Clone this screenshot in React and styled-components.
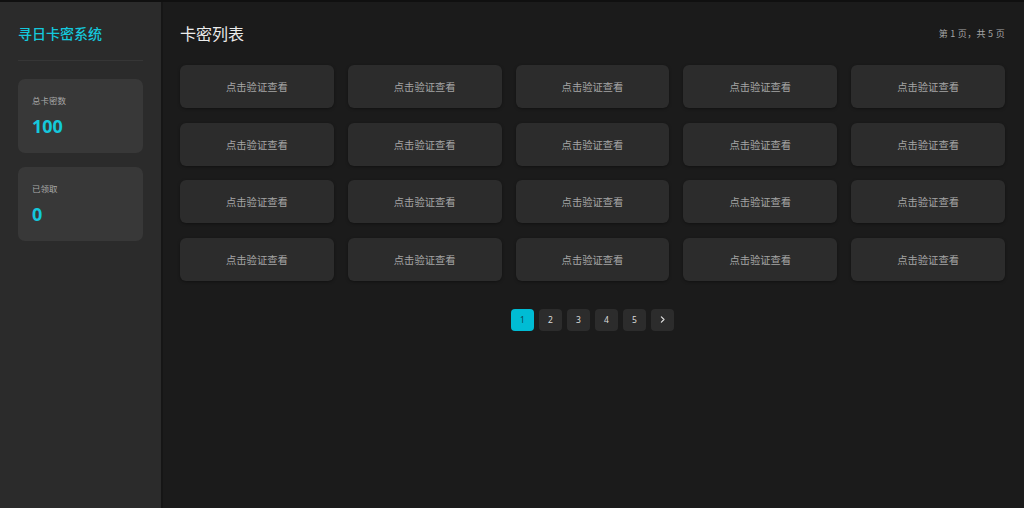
import React from 'react';
import styled, { createGlobalStyle } from 'styled-components';

const GlobalStyle = createGlobalStyle`
  html, body {
    margin: 0;
    padding: 0;
    background: #1b1b1b;
  }
  body {
    font-family: "Noto Sans CJK SC", "Noto Sans", sans-serif;
  }
  * {
    box-sizing: border-box;
  }
`;

const CYAN = '#14c8dc';

const Layout = styled.div`
  display: flex;
  height: 100vh;
  border-top: 2px solid #101010;
`;

const Sidebar = styled.aside`
  width: 163px;
  flex-shrink: 0;
  background: #2b2b2b;
  border-right: 2px solid #161616;
  padding: 18px 18px 0;
  display: flex;
  flex-direction: column;
`;

const Brand = styled.h1`
  margin: 0;
  font-size: 14px;
  line-height: 26px;
  font-weight: 500;
  color: ${CYAN};
  padding-bottom: 14px;
  border-bottom: 1px solid #363636;
`;

const StatList = styled.div`
  display: flex;
  flex-direction: column;
  gap: 14px;
  margin-top: 18px;
`;

const StatCard = styled.div`
  background: #383838;
  border-radius: 7px;
  height: 74px;
  padding: 15px 14px 0;
`;

const StatLabel = styled.div`
  font-size: 8.5px;
  line-height: 12px;
  color: #a8a8a8;
`;

const StatValue = styled.div`
  margin-top: 8px;
  font-family: "Noto Sans", sans-serif;
  font-size: 18px;
  line-height: 24px;
  font-weight: 700;
  color: ${CYAN};
`;

const Main = styled.main`
  flex: 1;
  padding: 18px 19px 0 17px;
  background: #1b1b1b;
`;

const Header = styled.div`
  display: flex;
  justify-content: space-between;
  align-items: center;
  height: 26px;
  margin-bottom: 19px;
`;

const Title = styled.h2`
  margin: 0;
  font-size: 16px;
  font-weight: 400;
  color: #ececec;
`;

const PageInfo = styled.span`
  font-size: 9px;
  color: #a6a6a6;
  letter-spacing: 0.3px;
`;

const Grid = styled.div`
  display: grid;
  grid-template-columns: repeat(5, 1fr);
  column-gap: 14px;
  row-gap: 14.5px;
`;

const KeyCard = styled.button`
  height: 43px;
  border: none;
  border-radius: 6px;
  background: #2c2c2c;
  box-shadow: 0 1px 3px rgba(0, 0, 0, 0.35);
  color: #a4a4a4;
  font-family: inherit;
  font-size: 10.3px;
  cursor: pointer;
  padding: 0;
`;

const Pager = styled.div`
  display: flex;
  justify-content: center;
  gap: 5.5px;
  margin-top: 28px;
`;

const PageButton = styled.button`
  width: 22.5px;
  height: 22px;
  border: none;
  border-radius: 4px;
  padding: 0;
  display: flex;
  align-items: center;
  justify-content: center;
  background: ${(p) => (p.$active ? '#00bcd4' : '#2c2c2c')};
  color: ${(p) => (p.$active ? '#0b4a55' : '#dcdcdc')};
  font-family: "Noto Sans", sans-serif;
  font-size: 8.5px;
  cursor: pointer;
`;

export default function App() {
  const cards = Array.from({ length: 20 }, (_, i) => i);
  const pages = [1, 2, 3, 4, 5];

  return (
    <>
      <GlobalStyle />
      <Layout>
        <Sidebar>
          <Brand>寻日卡密系统</Brand>
          <StatList>
            <StatCard>
              <StatLabel>总卡密数</StatLabel>
              <StatValue>100</StatValue>
            </StatCard>
            <StatCard>
              <StatLabel>已领取</StatLabel>
              <StatValue>0</StatValue>
            </StatCard>
          </StatList>
        </Sidebar>
        <Main>
          <Header>
            <Title>卡密列表</Title>
            <PageInfo>第 1 页，共 5 页</PageInfo>
          </Header>
          <Grid>
            {cards.map((i) => (
              <KeyCard key={i}>点击验证查看</KeyCard>
            ))}
          </Grid>
          <Pager>
            {pages.map((n) => (
              <PageButton key={n} $active={n === 1}>
                {n}
              </PageButton>
            ))}
            <PageButton>
              <svg width="9" height="9" viewBox="0 0 24 24" fill="none" stroke="#e0e0e0" strokeWidth="3.2" strokeLinecap="round" strokeLinejoin="round">
                <polyline points="9 5 16 12 9 19" />
              </svg>
            </PageButton>
          </Pager>
        </Main>
      </Layout>
    </>
  );
}
